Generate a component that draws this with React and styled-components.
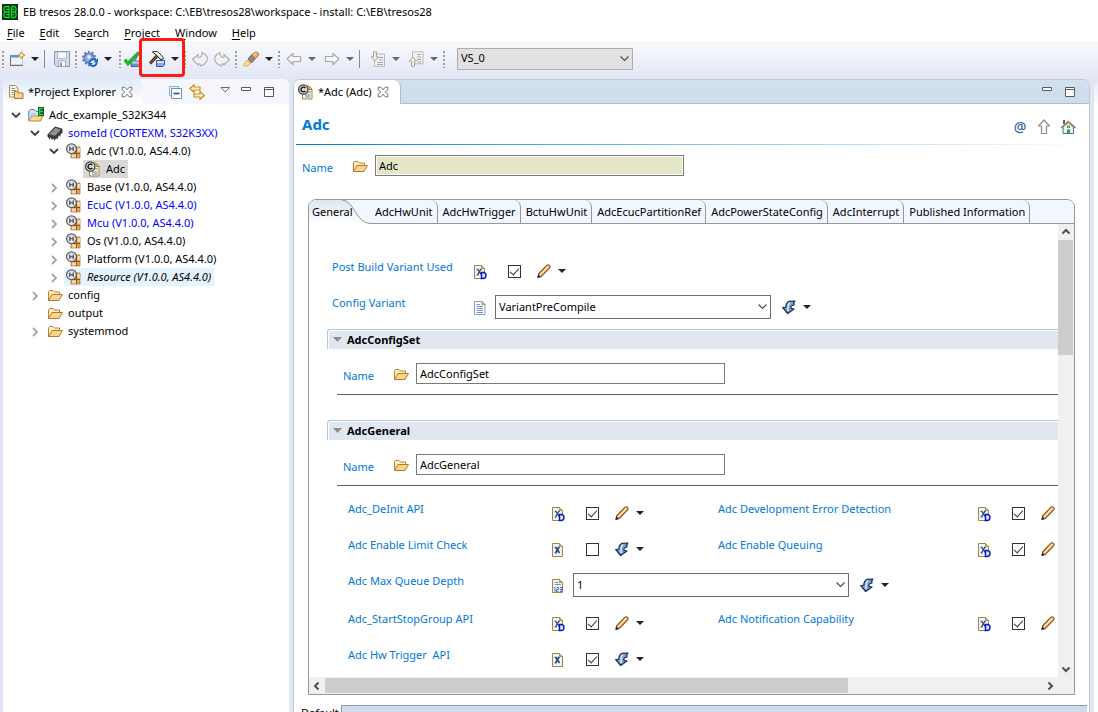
import React, { useState } from "react";
import styled, { createGlobalStyle, css } from "styled-components";

const GlobalStyle = createGlobalStyle`
  * {
    box-sizing: border-box;
  }

  body {
    margin: 0;
    background: #e1e6f6;
    color: #000000;
    font-family: "Noto Sans", "Open Sans", sans-serif;
    font-size: 11px;
    line-height: 16px;
  }

  button,
  input,
  select {
    font: inherit;
    color: inherit;
  }

  svg {
    display: block;
    flex: none;
  }
`;

/* Window */

const Window = styled.div`
  height: 100vh;
  display: flex;
  flex-direction: column;
  overflow: hidden;
  white-space: nowrap;
`;

const TitleBar = styled.header`
  display: flex;
  align-items: center;
  gap: 5px;
  height: 23px;
  flex: none;
  padding-left: 2px;
  background: #ffffff;
`;

const WindowTitle = styled.h1`
  margin: 0;
  font-size: 11px;
  font-weight: 400;
`;

const MenuBar = styled.nav`
  display: flex;
  align-items: center;
  gap: 15px;
  height: 19px;
  flex: none;
  padding-left: 7px;
  background: #ffffff;
`;

const PlainButton = styled.button`
  display: flex;
  align-items: center;
  justify-content: center;
  padding: 0;
  border: none;
  background: none;
  cursor: pointer;
`;

const MenuButton = styled(PlainButton)`
  display: block;

  u {
    text-underline-offset: 2px;
  }
`;

/* Toolbar */

const Toolbar = styled.div`
  display: flex;
  align-items: center;
  height: 37px;
  flex: none;
  padding: 0 0 5px 1px;
  border-top: 1px solid #f0f0f0;
  background: linear-gradient(#f8f9fd, #e1e6f6);
`;

const Group = styled.div`
  display: flex;
  align-items: center;
  gap: ${({ $gap }) => $gap || 2}px;
  padding-left: ${({ $before }) => $before || 0}px;
  padding-right: ${({ $after }) => $after || 0}px;
`;

const Split = styled.div`
  position: relative;
  display: flex;
`;

const ToolButton = styled(PlainButton)`
  width: 20px;
  height: 20px;
`;

const CaretButton = styled(PlainButton)`
  width: 16px;
  height: 20px;
`;

const Handle = styled.div`
  width: 4px;
  height: 18px;
  background: radial-gradient(circle at 2px 2px, #a09c94 1px, transparent 1px) 0 0 / 4px 4px;
`;

const Separator = styled.div`
  width: 4px;
  height: 18px;
  border-left: 1px solid #8a8a8a;
  margin-right: -1px;
  margin-left: 1px;
`;

const Highlight = styled.span`
  position: absolute;
  inset: -11px -2px -8px -8px;
  border: 3px solid #fb1d12;
  border-radius: 4px;
  pointer-events: none;
`;

/* Select */

const SelectBox = styled.div`
  display: grid;
  align-items: center;
  width: ${({ $width }) => $width}px;
  margin-left: ${({ $before }) => $before || 0}px;

  > * {
    grid-area: 1 / 1;
  }

  > svg {
    justify-self: end;
    margin-right: 3px;
    pointer-events: none;
  }
`;

const SelectInput = styled.select`
  appearance: none;
  width: 100%;
  height: ${({ $flat }) => ($flat ? 22 : 24)}px;
  padding: 0 20px 1px 3px;
  border: 1px solid ${({ $flat }) => ($flat ? "#adadad" : "#6f6f6f")};
  border-radius: 0;
  background: ${({ $flat }) => ($flat ? "#e1e1e1" : "#ffffff")};
`;

/* Workspace */

const Workspace = styled.main`
  flex: 1;
  min-height: 0;
  display: grid;
  grid-template-columns: 286px minmax(0, 1fr) 4px;
  column-gap: 4px;
  padding-left: 3px;
`;

const Explorer = styled.aside`
  display: flex;
  flex-direction: column;
  background: #ffffff;
  border-radius: 6px 6px 0 0;
  overflow: hidden;
`;

const ViewBar = styled.div`
  display: flex;
  align-items: center;
  height: 25px;
  flex: none;
  background: #f5f7fd;
`;

const ViewTab = styled.div`
  display: flex;
  align-items: center;
  gap: 4px;
  width: 139px;
  height: 25px;
  padding-left: 5px;
  border-radius: 6px 6px 0 0;
  background: linear-gradient(#e0ebf6, #ffffff);
`;

const ViewTools = styled.div`
  display: flex;
  align-items: center;
  gap: 2px;
  margin-left: auto;
  padding-right: ${({ $after }) => $after}px;
`;

const Tree = styled.ul`
  list-style: none;
  margin: 0;
  padding: 2px 0 0 5px;
`;

const TreeRow = styled.li`
  display: flex;
  align-items: center;
  gap: 2px;
  height: 18px;
  padding-left: ${({ $level }) => $level * 19}px;
`;

const Twisty = styled(PlainButton)`
  width: 16px;
  height: 16px;
`;

const TreeItem = styled.span`
  display: flex;
  align-items: center;
  gap: 5px;
  height: 18px;
  padding: 0 3px 0 2px;
  color: ${({ $blue }) => ($blue ? "#0000ff" : "#000000")};
  ${({ $selected }) => $selected && css`background: #d9d9d9;`}
  ${({ $hovered }) => $hovered && css`background: #e5f3ff; font-style: italic;`}
`;

/* Editor */

const Editor = styled.section`
  display: flex;
  flex-direction: column;
  min-width: 0;
  min-height: 0;
  border: 1px solid #c4c8ce;
  border-bottom: none;
  border-radius: 7px 7px 0 0;
  background: #ffffff;
  overflow: hidden;
`;

const EditorBar = styled.div`
  display: flex;
  height: 24px;
  flex: none;
  background: linear-gradient(#d3e1ef, #cddcec);
`;

const EditorTab = styled.div`
  display: flex;
  align-items: center;
  gap: 4px;
  width: 107px;
  padding-left: 4px;
  border-right: 1px solid #b4bac4;
  border-radius: 0 7px 0 0;
  background: #ffffff;
`;

const EditorBarRest = styled.div`
  flex: 1;
  display: flex;
  border-bottom: 1px solid #b0bccb;
`;

const FormHeader = styled.div`
  display: flex;
  align-items: center;
  height: 41px;
  flex: none;
  margin: 0 7px 0 2px;
  padding: 0 4px 0 6px;
  border-bottom: 1px solid;
  border-image: linear-gradient(90deg, #0078d7, #9dcdf2 60%, #ffffff) 1;
`;

const FormTitle = styled.h2`
  flex: 1;
  margin: 0;
  color: #0078d7;
  font-size: 15px;
  line-height: 20px;
`;

const HeaderTools = styled.div`
  display: flex;
  gap: 4px;
  padding-top: 5px;
`;

const Label = styled.label`
  color: #0078d7;
  width: ${({ $width }) => ($width ? $width + "px" : "auto")};
  white-space: pre;
`;

const TextInput = styled.input`
  width: 309px;
  height: 21px;
  padding: 0 3px;
  border: 1px solid #7a7a7a;
  border-radius: 0;
  background: ${({ readOnly }) => (readOnly ? "#e5e6c8" : "#ffffff")};
  ${({ readOnly }) => readOnly && css`box-shadow: inset 0 0 0 1px #ffffff;`}
`;

const NameRow = styled.div`
  display: flex;
  align-items: center;
  gap: 6px;
  padding-left: ${({ $before }) => $before}px;

  ${Label} {
    width: 44px;
    padding-top: 4px;
  }

  svg {
    margin-right: 1px;
  }
`;

const TopName = styled.div`
  flex: none;
  padding: 10px 0 23px;
`;

/* Tab folder */

const Folder = styled.div`
  flex: 1;
  min-height: 0;
  display: flex;
  flex-direction: column;
  margin: 0 14px 10px;
  border: 1px solid #979797;
  border-radius: 8px 8px 0 0;
  overflow: hidden;
`;

const TabBar = styled.div`
  display: flex;
  height: 24px;
  flex: none;
  background: #f2f7ff;
`;

const Tab = styled.button`
  height: 24px;
  padding: 0 4px 0 5px;
  border: none;
  border-right: 1px solid #979797;
  border-bottom: 1px solid #979797;
  border-radius: 0 7px 0 0;
  background: none;
`;

const ActiveTab = styled.button`
  display: flex;
  align-items: center;
  height: 24px;
  padding: 0 0 0 3px;
  border: none;
  background: linear-gradient(#dde6f0, #ffffff);
`;

const TabLabel = styled.span`
  position: relative;
  width: 30px;
  z-index: 1;
`;

const TabFill = styled.div`
  flex: 1;
  border-bottom: 1px solid #979797;
`;

const Scroller = styled.div`
  flex: 1;
  min-height: 0;
  display: grid;
  grid-template-columns: minmax(0, 1fr) 16px;
  grid-template-rows: minmax(0, 1fr) 17px;
`;

const Page = styled.div`
  overflow: hidden;
  padding: 35px 0 0 18px;
`;

const Track = styled.div`
  display: flex;
  align-items: ${({ $vertical }) => ($vertical ? "stretch" : "center")};
  flex-direction: ${({ $vertical }) => ($vertical ? "column" : "row")};
  background: #f0f0f0;
`;

const ScrollButton = styled(PlainButton)`
  width: 16px;
  height: 16px;
  flex: none;
`;

const Rail = styled.div`
  flex: 1;
`;

const Thumb = styled.div`
  background: #cdcdcd;
  ${({ $vertical, $size }) => ($vertical ? `height: ${$size}; margin-right: 1px;` : `height: 15px; width: ${$size};`)}
`;

/* Form */

const Intro = styled.div`
  height: 70px;
`;

const Field = styled.div`
  display: flex;
  align-items: flex-start;
  height: 36px;
  padding-left: ${({ $before }) => $before || 0}px;
`;

const Controls = styled.div`
  display: flex;
  align-items: center;
  height: 24px;
  padding-left: ${({ $before }) => $before || 0}px;
`;

const TypeIcon = styled.span`
  width: ${({ $width }) => $width}px;
  padding-top: 2px;
`;

const Check = styled.input`
  appearance: none;
  display: grid;
  justify-content: center;
  width: 13px;
  height: 13px;
  margin: 0 13px 0 0;
  border: 1px solid #333333;
  background: #ffffff;

  &:checked::after {
    content: "";
    width: 4px;
    height: 8px;
    border: solid #333333;
    border-width: 0 1px 1px 0;
    transform: rotate(42deg);
  }
`;

const Section = styled.section`
  margin-top: ${({ $gap }) => $gap}px;
`;

const SectionTitle = styled.h3`
  display: flex;
  align-items: center;
  gap: 5px;
  height: 20px;
  margin: 0 0 14px;
  padding-left: 5px;
  border-top: 1px solid #b3c7dc;
  border-left: 1px solid #b3c7dc;
  border-radius: 3px 0 0 0;
  background: #e0e7f1;
  box-shadow: inset 1px 1px 0 #ffffff;
  font-size: 11px;
`;

const Rule = styled.hr`
  margin: 10px 0 0 10px;
  border: none;
  border-top: 1px solid #5f5f5f;
`;

const Fields = styled.div`
  display: grid;
  grid-template-columns: 391px max-content;
  padding-top: 15px;
`;

const WideField = styled.div`
  grid-column: 1 / -1;
  height: 38px;
`;

const Footer = styled.footer`
  display: flex;
  height: 7px;
  flex: none;
  margin: 0 2px 0 7px;
  overflow: hidden;
`;

const FooterLabel = styled.span`
  width: 40px;
`;

const FooterStrip = styled.div`
  flex: 1;
  border-top: 1px solid #8e9aa8;
  border-left: 1px solid #8e9aa8;
  background: #cfddee;
`;

const SideView = styled.aside`
  margin-top: 4px;
  border-radius: 5px 0 0 0;
  background: linear-gradient(#e9edf8, #ffffff 24px);
`;

/* Icons */

const Icon = ({ size = 16, children }) => (
  <svg width={size} height={size} viewBox="0 0 16 16" fill="none" aria-hidden="true">
    {children}
  </svg>
);

const LogoIcon = () => (
  <Icon>
    <path fill="#143314" d="M0 0h16v16H0z" />
    <g stroke="#0fd32f" strokeWidth="1.3">
      <path d="M7 2.500H4.200a2.200 2.200 0 0 0-2.200 2V6a1.800 1.800 0 0 0 2 2h3M7 8H4a1.800 1.800 0 0 0-2 2v1.500a2.200 2.200 0 0 0 2.200 2H7zM7 2.500V8M4 5.300h3M4 10.700h3" />
      <path d="M9.500 2.500V14M9.500 2.500h2.200A2.200 2.200 0 0 1 14 4.600V6a1.900 1.900 0 0 1-2 2H9.500M12 8a2 2 0 0 1 2 2v1.300a2.200 2.200 0 0 1-2.200 2.200H9.500M9.500 5.300H12M9.500 10.700H12" />
    </g>
  </Icon>
);

const Caret = ({ color = "#222222" }) => (
  <svg width="8" height="4" viewBox="0 0 8 4" aria-hidden="true">
    <path fill={color} d="M0 0h8L4 4z" />
  </svg>
);

const Chevron = ({ down, color = "#404040" }) => (
  <Icon>
    <path d={down ? "M4 6l4 4 4-4" : "M6 5l4 4-4 4"} stroke={color} strokeWidth="1.8" />
  </Icon>
);

const ThinChevron = () => (
  <svg width="11" height="6" viewBox="0 0 11 6" fill="none" aria-hidden="true">
    <path d="M1.500 .5l4 4 4-4" stroke="#4a4a4a" strokeWidth="1.100" />
  </svg>
);

const ScrollArrow = ({ turn }) => (
  <Icon>
    <path d="M4.500 9.500L8 6l3.500 3.500" stroke="#505050" strokeWidth="2" transform={`rotate(${turn} 8 8)`} />
  </Icon>
);

const NewIcon = () => (
  <Icon>
    <rect x="1.500" y="4.500" width="12" height="10" fill="#eaf4fc" stroke="#8a6d2c" />
    <path fill="#5d94cf" d="M1 4h9v2.500H1z" />
    <path d="M3 13.500h10.500V7" stroke="#bcd8ee" />
    <path d="M12.500 .5l1.200 2.500L16 4.200l-2.300 1.200-1.200 2.600-1.200-2.600L9 4.200 11.300 3z" fill="#ffe9a0" stroke="#b98a22" strokeWidth=".9" />
  </Icon>
);

const SaveIcon = () => (
  <Icon>
    <path d="M.5 .5h15v15H2.500L.5 13.500z" fill="#d3dde9" stroke="#8499b2" />
    <path fill="#f7fafd" stroke="#9caec2" strokeWidth=".7" d="M3.500 1h9v6.500h-9z" />
    <path fill="#f7fafd" stroke="#8499b2" strokeWidth=".7" d="M4.500 10h7v5.500h-7z" />
    <path fill="#8499b2" d="M6 11.500h2v4H6z" />
  </Icon>
);

const GearIcon = () => (
  <Icon>
    <circle cx="7" cy="7" r="5" fill="#8fa9dd" stroke="#516caa" strokeWidth="1.200" />
    <circle cx="7" cy="7" r="6.300" stroke="#516caa" strokeWidth="1.500" strokeDasharray="2 1.960" />
    <circle cx="7" cy="6" r="1.800" fill="#e6eefa" />
    <path fill="#eef4fd" d="M7 8h8.500v7H9z" />
    <path d="M7.500 11.500a3.600 3.600 0 0 1 6.300-2M14.700 11.500a3.600 3.600 0 0 1-6.300 2.200" stroke="#1767c8" strokeWidth="2" />
    <path fill="#1767c8" d="M16 7v4.500h-4.500zM6.500 16v-4.500l4.500.5z" />
  </Icon>
);

const CheckIcon = () => (
  <Icon>
    <path fill="#6a92cc" stroke="#2d4f90" strokeWidth=".8" d="M7 10h9v4.500l-2 1H7z" />
    <path fill="#bfd4ef" d="M8 10.500h8v2H8z" />
    <path d="M.8 8.500l3.200 4L15 1.500" stroke="#21b52c" strokeWidth="3.600" />
    <path d="M11 9.500l4-8" stroke="#777777" strokeWidth="1.500" />
  </Icon>
);

const HammerIcon = () => (
  <Icon>
    <path fill="#86abe0" stroke="#28489a" strokeWidth=".9" d="M7.500 9.500h8v4.500l-2 1.500h-6z" />
    <path fill="#d5e4f7" d="M8 10h7v2H8z" />
    <path d="M1 12.500L8.500 4.500" stroke="#4a2f14" strokeWidth="3.200" />
    <path d="M1.500 12l6.500-7" stroke="#96703c" strokeWidth="1" />
    <path d="M3.500 1C6.500 0 9.500.5 11 3l3.500 4-1.200 1.500-2.300-.3-3.500-4z" fill="#e4e4e4" stroke="#1f1f1f" />
    <path d="M5 1.300l4.500 1 3.500 4.500" stroke="#ffffff" strokeWidth=".9" />
  </Icon>
);

const UndoIcon = ({ flip }) => (
  <Icon>
    <path
      transform={flip ? "matrix(-1 0 0 1 16 0)" : undefined}
      d="M.6 8.500L6 3.500V6.500c2.800.2 4.300-1.500 4-5 4 2 6 5 5 8C14 12 11.500 14 8.500 15l-.5-2-2-.2V14z"
      fill="#f2f2f2"
      stroke="#adadad"
      strokeWidth="1.100"
    />
  </Icon>
);

const TorchIcon = () => (
  <Icon>
    <path d="M.5 13.500L4 9l3.500 3.500L4.500 15H1z" fill="#ffe08a" stroke="#e3a63a" strokeWidth=".9" />
    <path d="M5 8l3.500-4 4 3.500-4 4.500z" fill="#918787" stroke="#5d5454" strokeWidth=".9" />
    <path d="M8.500 4L13 .8l2.500 1.500-.3 2.500L12.300 7.500z" fill="#e7b26d" stroke="#b17328" />
    <path d="M10.500 4l3-2" stroke="#fff0c8" />
  </Icon>
);

const ArrowIcon = ({ turn = 0, color = "#a9a9a9" }) => (
  <Icon>
    <path
      transform={`rotate(${turn} 8 8)`}
      d="M1 8l6-5.500v3h7.500v5H7v3z"
      fill="#fafafa"
      stroke={color}
      strokeWidth="1.200"
      strokeLinejoin="round"
    />
  </Icon>
);

const ListArrowIcon = ({ up }) => (
  <Icon>
    <path fill="#f3f3f3" stroke="#b2b2b2" strokeWidth=".9" d={up ? "M4.500 .8h10.500v12H4.500z" : "M4.500 3h10v12.300h-10z"} />
    <path stroke="#a3a3a3" d={up ? "M9 3.500h4M9 6h4M9 8.500h4M10 11h3" : "M9 6.500h4M9 9h4M7 11.500h6M7 13.500h6"} />
    <path
      transform={up ? "translate(0 16) scale(1 -1)" : undefined}
      d="M3.500 .8h3v5h2.300L5 10 1 5.800h2.500z"
      fill="#ecebe4"
      stroke="#a8a59a"
    />
  </Icon>
);

const ExplorerIcon = () => (
  <Icon>
    <path d="M1.500 1.500h6l2.500 2.500v9H1.500z" fill="#fff9e2" stroke="#b0893d" />
    <path stroke="#6d8fc4" d="M3.500 4.500H7M3.500 6.500H8M3.500 8.500h2M3.500 10.500h2" />
    <path d="M6.500 14.500v-7h3l1 1.500h4.500v5.500z" fill="#f6d48b" stroke="#b1772b" />
  </Icon>
);

const CloseIcon = () => (
  <Icon size={14}>
    <path
      d="M2.500 2.500h3L8 5.500l2.500-3h3v3l-3 2.500 3 2.500v3h-3L8 10.500l-2.500 3h-3v-3l3-2.500-3-2.500z"
      fill="#ffffff"
      stroke="#6d6d6d"
      strokeWidth="1.100"
    />
  </Icon>
);

const CollapseIcon = () => (
  <Icon>
    <path fill="#e8f3fc" stroke="#8eafd2" d="M2.500 2.500h9v9h-9z" />
    <path fill="#ffffff" stroke="#6d94c0" d="M4.500 4.500h10v10h-10z" />
    <path stroke="#183f77" strokeWidth="1.500" d="M6.500 9.500h6" />
  </Icon>
);

const LinkIcon = () => (
  <Icon>
    <path d="M.8 4.500L5 .8V3h6v3H5v2.300zM15.500 11.500L11 15.300V13H5v-3h6V7.500z" fill="#fff1c9" stroke="#cf8b1c" strokeWidth="1.200" />
  </Icon>
);

const ViewMenuIcon = () => (
  <Icon>
    <path d="M4 3.500h8.500L8.200 8z" fill="#ffffff" stroke="#6a6a6a" />
  </Icon>
);

const MinimizeIcon = () => (
  <Icon>
    <path fill="#ffffff" stroke="#5a5a5a" d="M2.500 3.500h9v3h-9z" />
  </Icon>
);

const MaximizeIcon = () => (
  <Icon>
    <path fill="#ffffff" stroke="#5a5a5a" d="M3.500 3.500h9v9h-9zM3.500 5.500h9" />
  </Icon>
);

const ProjectIcon = () => (
  <Icon>
    <path d="M.8 13.500V4l1.500-1.500h4L8 4.500h5v9z" fill="#d5e8f8" stroke="#5a7fae" />
    <path d="M.8 14l3-5h11l-2.500 5z" fill="#f9d98c" stroke="#b98b3e" />
    <path d="M3 6h5v3H3z" fill="#9fd1f1" />
    <path fill="#1d4d26" d="M10 0h6v9h-6z" />
    <path d="M15 1.500h-3.500v6H15M11.500 4.500H15" stroke="#18d843" strokeWidth="1.400" />
  </Icon>
);

const ChipIcon = () => (
  <Icon>
    <path d="M1 9.500L8 2l7 2v3.500L8.500 14 1 12z" fill="#3c3c3c" stroke="#222222" strokeWidth=".8" />
    <path d="M2 9.300l6.300-6.500 5.700 1.600L8 10.800z" fill="#8f8f8f" />
    <path d="M2.500 12.500v2M5 13v2M7.500 13.500v2M10.500 12v2M13 9.500v2" stroke="#444444" />
  </Icon>
);

const ModuleIcon = () => (
  <Icon>
    <path d="M5 4h9v11H5z" fill="#e2a766" stroke="#a86a2c" strokeWidth=".7" />
    <path d="M5.500 10.500H14M10.500 4v11" stroke="#8b5520" />
    <path d="M11.500 5H14v4h-2.500zM6 11.500h4v3H6z" fill="#f6d5a5" />
    <circle cx="5.500" cy="5.700" r="4.900" fill="#e4e4ea" stroke="#5c5c66" strokeWidth="1.200" />
    <path d="M3.800 3.500v4.500M7.200 3.500v4.500M3.800 5.700h3.400" stroke="#3b3b45" strokeWidth="1.100" />
  </Icon>
);

const ConfigIcon = () => (
  <Icon>
    <path d="M4.500 2h6.500l3 3v10H4.500z" fill="#fff8e0" stroke="#ab8639" />
    <path d="M11 2v3.500h3" fill="#e9b64c" stroke="#ab8639" />
    <path stroke="#5b82bd" d="M10 8h3M7 11h5.500M7 13h5.500" />
    <circle cx="5.300" cy="5.500" r="4.700" fill="#d9d9d9" stroke="#3c3c3c" strokeWidth="1.200" />
    <path d="M7.300 4a2.400 2.400 0 1 0 0 3" stroke="#111111" strokeWidth="1.400" />
  </Icon>
);

const FolderIcon = () => (
  <Icon>
    <path d="M1.500 13.500v-9l1-1h3.500l1.500 1.500h5v3" fill="#fdeebb" stroke="#b5823a" />
    <path d="M1.500 13.500L5 7.500h10.500l-3.500 6z" fill="#f8d68a" stroke="#b5782c" strokeLinejoin="round" />
  </Icon>
);

const PageShape = () => (
  <>
    <path d="M2.500 1.500h7l3 3v10h-10z" fill="#eef4fc" stroke="#a3853a" />
    <path d="M9.500 1.500v3h3z" fill="#e6bd5f" stroke="#a3853a" strokeWidth=".8" />
  </>
);

const VariableIcon = ({ derived }) => (
  <Icon>
    <PageShape />
    <path d="M5.500 5l4 6M9 5l-3.500 6" stroke="#28456f" strokeWidth={derived ? 1.3 : 1.6} />
    <path d="M4.500 5.300h2M8.500 5.300h1.500M4.500 11h2" stroke="#28456f" strokeWidth=".8" />
    {derived && <path d="M9.500 8.500v6h1.500a3 3 0 0 0 0-6zM8.500 8.500h2M8.500 14.500h2" fill="#d9e4ff" stroke="#0b18b8" strokeWidth="1.400" />}
  </Icon>
);

const EnumIcon = () => (
  <Icon>
    <path d="M2.500 1.500h7.500l3 3v10H2.500z" fill="#ffffff" stroke="#8b9dbd" />
    <path d="M10 1.500v3h3z" fill="#e6c98a" stroke="#a3853a" strokeWidth=".8" />
    <path stroke="#7893cc" d="M4.500 4.500H8M4.500 6.500h6.500M4.500 8.500h6.500M4.500 10.500h6.500M4.500 12.500h6.500" />
  </Icon>
);

const NumberIcon = () => (
  <Icon>
    <PageShape />
    <path stroke="#7893cc" d="M4.500 4.500H8M4.500 6.500h6.500" />
    <path stroke="#3c64ac" strokeWidth=".9" d="M4 9.500h1v4.500M6.500 9.500h2v2h-2v2h2M10 9.500h2v4h-2M10 11.500h2" />
  </Icon>
);

const PencilIcon = () => (
  <Icon>
    <path d="M2.500 11L10.500 2.700c1-1 2.300-1 3-.4.900.8.700 2-.1 2.900L5.300 13.500l-2.800.8z" fill="#f3b873" stroke="#8f5218" strokeWidth="1.100" />
    <path d="M4.500 11.500l8-8.300" stroke="#ffe2b8" strokeWidth="1.400" />
    <path d="M1.200 15l.9-3.700 2.700 2.700z" fill="#15245f" />
  </Icon>
);

const ApplyIcon = () => (
  <Icon>
    <path
      d="M13.800 2L8 2.300C5.300 3.800 4.700 6 4.900 8.200L1.700 8.500l5 6 6.300-4.500-3-.6c-.4-1.700.2-2.900 3-3.400-.6-1.500-.2-2.800.8-4z"
      fill="#7f9fc8"
      stroke="#16305c"
      strokeWidth="1.200"
      strokeLinejoin="round"
    />
    <path d="M9 3.500C6.500 5.500 7 8 7 12" stroke="#dbe8f5" strokeWidth="1.600" />
  </Icon>
);

const HomeIcon = () => (
  <Icon>
    <path d="M3 8v6.500h10.500V8L8.300 3.500z" fill="#e9f3fc" stroke="#3c73a4" />
    <path d="M1 9l7.200-6.500L15.500 9" stroke="#a58457" strokeWidth="1.600" />
    <path fill="#8a5a33" d="M3 1h2v4H3z" />
    <path fill="#3f9a3d" d="M7 6.500h3v2.500H7zM7 10.500h3V15H7z" />
    <path fill="#d9e44b" d="M8 7h1v1.500H8z" />
  </Icon>
);

const SectionCaret = () => (
  <svg width="9" height="5" viewBox="0 0 9 5" aria-hidden="true">
    <path d="M0 0h9L4.500 5z" fill="#8d8d8d" />
  </svg>
);

const AtIcon = styled.span`
  color: #2a66a5;
  font-size: 14px;
  font-weight: 500;
  line-height: 16px;
`;

/* Parts */

const menus = [
  ["", "F", "ile"],
  ["", "E", "dit"],
  ["Se", "a", "rch"],
  ["", "P", "roject"],
  ["", "W", "indow"],
  ["", "H", "elp"],
];

const tree = [
  { level: 0, open: true, icon: <ProjectIcon />, text: "Adc_example_S32K344" },
  { level: 1, open: true, icon: <ChipIcon />, text: "someId (CORTEXM, S32K3XX)", blue: true },
  { level: 2, open: true, icon: <ModuleIcon />, text: "Adc (V1.0.0, AS4.4.0)" },
  { level: 3, leaf: true, icon: <ConfigIcon />, text: "Adc", selected: true },
  { level: 2, icon: <ModuleIcon />, text: "Base (V1.0.0, AS4.4.0)" },
  { level: 2, icon: <ModuleIcon />, text: "EcuC (V1.0.0, AS4.4.0)", blue: true },
  { level: 2, icon: <ModuleIcon />, text: "Mcu (V1.0.0, AS4.4.0)", blue: true },
  { level: 2, icon: <ModuleIcon />, text: "Os (V1.0.0, AS4.4.0)" },
  { level: 2, icon: <ModuleIcon />, text: "Platform (V1.0.0, AS4.4.0)" },
  { level: 2, icon: <ModuleIcon />, text: "Resource (V1.0.0, AS4.4.0)", hovered: true },
  { level: 1, icon: <FolderIcon />, text: "config" },
  { level: 1, leaf: true, icon: <FolderIcon />, text: "output" },
  { level: 1, icon: <FolderIcon />, text: "systemmod" },
];

const tabs = [
  "AdcHwUnit",
  "AdcHwTrigger",
  "BctuHwUnit",
  "AdcEcucPartitionRef",
  "AdcPowerStateConfig",
  "AdcInterrupt",
  "Published Information",
];

const Tool = ({ label, children }) => (
  <ToolButton type="button" aria-label={label}>
    {children}
  </ToolButton>
);

const SplitTool = ({ label, disabled, highlighted, children }) => (
  <Split>
    <Tool label={label}>{children}</Tool>
    <CaretButton type="button" aria-label={`${label} options`}>
      <Caret color={disabled ? "#6a6a6a" : undefined} />
    </CaretButton>
    {highlighted && <Highlight />}
  </Split>
);

const Select = ({ id, label, width, before, flat, value }) => (
  <SelectBox $width={width} $before={before}>
    <SelectInput id={id} aria-label={label} $flat={flat} defaultValue={value}>
      <option>{value}</option>
    </SelectInput>
    <ThinChevron />
  </SelectBox>
);

const CheckField = ({ id, label, labelWidth, before, derived, on, edit }) => {
  const [checked, setChecked] = useState(Boolean(on));

  return (
    <Field $before={before}>
      <Label htmlFor={id} $width={labelWidth}>{label}</Label>
      <Controls>
        <TypeIcon $width={36}>
          <VariableIcon derived={derived} />
        </TypeIcon>
        <Check id={id} type="checkbox" checked={checked} onChange={(e) => setChecked(e.target.checked)} />
        <SplitTool label={`Edit ${label}`}>{edit ? <PencilIcon /> : <ApplyIcon />}</SplitTool>
      </Controls>
    </Field>
  );
};

const NamedSection = ({ title, gap, children }) => (
  <Section $gap={gap}>
    <SectionTitle>
      <SectionCaret />
      {title}
    </SectionTitle>
    <NameRow $before={16}>
      <Label htmlFor={title}>Name</Label>
      <FolderIcon />
      <TextInput id={title} defaultValue={title} />
    </NameRow>
    <Rule />
    {children}
  </Section>
);

export default function App() {
  return (
    <Window>
      <GlobalStyle />
      <TitleBar>
        <LogoIcon />
        <WindowTitle>EB tresos 28.0.0 - workspace: C:\EB\tresos28\workspace - install: C:\EB\tresos28</WindowTitle>
      </TitleBar>
      <MenuBar>
        {menus.map(([start, key, end]) => (
          <MenuButton type="button" key={start + key}>
            {start}<u>{key}</u>{end}
          </MenuButton>
        ))}
      </MenuBar>

      <Toolbar>
        <Handle />
        <Group $before={2}>
          <SplitTool label="New"><NewIcon /></SplitTool>
        </Group>
        <Separator />
        <Group $before={5} $after={2}>
          <Tool label="Save"><SaveIcon /></Tool>
        </Group>
        <Handle />
        <Group $before={2} $after={2}>
          <SplitTool label="Generate"><GearIcon /></SplitTool>
        </Group>
        <Handle />
        <Group $gap={5}>
          <Tool label="Verify"><CheckIcon /></Tool>
          <SplitTool label="Build" highlighted><HammerIcon /></SplitTool>
        </Group>
        <Handle />
        <Group $before={3} $after={2}>
          <Tool label="Undo"><UndoIcon /></Tool>
          <Tool label="Redo"><UndoIcon flip /></Tool>
        </Group>
        <Handle />
        <Group $before={3}>
          <SplitTool label="Search"><TorchIcon /></SplitTool>
        </Group>
        <Handle />
        <Group $before={3}>
          <SplitTool label="Back" disabled><ArrowIcon /></SplitTool>
          <SplitTool label="Forward" disabled><ArrowIcon turn={180} /></SplitTool>
        </Group>
        <Separator />
        <Group $before={6}>
          <SplitTool label="Next annotation" disabled><ListArrowIcon /></SplitTool>
          <SplitTool label="Previous annotation" disabled><ListArrowIcon up /></SplitTool>
        </Group>
        <Handle />
        <Select label="Variant" width={176} before={11} flat value="VS_0" />
      </Toolbar>

      <Workspace>
        <Explorer>
          <ViewBar>
            <ViewTab>
              <ExplorerIcon />
              *Project Explorer
              <CloseIcon />
            </ViewTab>
            <ViewTools $after={10}>
              <Group $after={6}>
                <Tool label="Collapse all"><CollapseIcon /></Tool>
                <Tool label="Link with editor"><LinkIcon /></Tool>
              </Group>
              <Tool label="View menu"><ViewMenuIcon /></Tool>
              <Tool label="Minimize"><MinimizeIcon /></Tool>
              <Tool label="Maximize"><MaximizeIcon /></Tool>
            </ViewTools>
          </ViewBar>
          <Tree>
            {tree.map((item) => (
              <TreeRow key={item.text} $level={item.level}>
                <Twisty type="button" aria-label={`Toggle ${item.text}`}>
                  {!item.leaf && <Chevron down={item.open} color={item.open ? "#404040" : "#a6a6a6"} />}
                </Twisty>
                <TreeItem $blue={item.blue} $selected={item.selected} $hovered={item.hovered}>
                  {item.icon}
                  {item.text}
                </TreeItem>
              </TreeRow>
            ))}
          </Tree>
        </Explorer>

        <Editor>
          <EditorBar>
            <EditorTab>
              <ConfigIcon />
              *Adc (Adc)
              <CloseIcon />
            </EditorTab>
            <EditorBarRest>
              <ViewTools $after={9}>
                <Tool label="Minimize editor"><MinimizeIcon /></Tool>
                <Tool label="Maximize editor"><MaximizeIcon /></Tool>
              </ViewTools>
            </EditorBarRest>
          </EditorBar>

          <FormHeader>
            <FormTitle>Adc</FormTitle>
            <HeaderTools>
              <Tool label="Annotations"><AtIcon>@</AtIcon></Tool>
              <Tool label="Up"><ArrowIcon turn={90} color="#8f8f8f" /></Tool>
              <Tool label="Home"><HomeIcon /></Tool>
            </HeaderTools>
          </FormHeader>

          <TopName>
            <NameRow $before={8}>
              <Label htmlFor="name">Name</Label>
              <FolderIcon />
              <TextInput id="name" readOnly value="Adc" />
            </NameRow>
          </TopName>

          <Folder>
            <TabBar>
              <ActiveTab type="button">
                <TabLabel>General</TabLabel>
                <svg width="28" height="24" viewBox="0 0 28 24" fill="none" aria-hidden="true">
                  <path d="M0 0c12 0 14 23 28 23.500V0z" fill="#f2f7ff" />
                  <path d="M0 0c12 0 14 23 28 23.500" stroke="#979797" />
                </svg>
              </ActiveTab>
              {tabs.map((tab) => (
                <Tab type="button" key={tab}>{tab}</Tab>
              ))}
              <TabFill />
            </TabBar>

            <Scroller>
              <Page>
                <Intro>
                  <CheckField id="post-build" label="Post Build Variant Used" labelWidth={140} before={5} derived on edit />
                  <Field $before={5}>
                    <Label htmlFor="config-variant" $width={140}>Config Variant</Label>
                    <Controls>
                      <TypeIcon $width={23}><EnumIcon /></TypeIcon>
                      <Select id="config-variant" width={276} value="VariantPreCompile" />
                      <Group $before={8}>
                        <SplitTool label="Edit Config Variant"><ApplyIcon /></SplitTool>
                      </Group>
                    </Controls>
                  </Field>
                </Intro>

                <NamedSection title="AdcConfigSet" gap={0} />

                <NamedSection title="AdcGeneral" gap={25}>
                  <Fields>
                    <CheckField id="deinit" label="Adc_DeInit API" labelWidth={202} before={21} derived on edit />
                    <CheckField id="det" label="Adc Development Error Detection" labelWidth={258} derived on edit />
                    <CheckField id="limit" label="Adc Enable Limit Check" labelWidth={202} before={21} />
                    <CheckField id="queuing" label="Adc Enable Queuing" labelWidth={258} derived on edit />
                    <WideField>
                      <Field $before={21}>
                        <Label htmlFor="depth" $width={202}>Adc Max Queue Depth</Label>
                        <Controls>
                          <TypeIcon $width={23}><NumberIcon /></TypeIcon>
                          <Select id="depth" width={276} value="1" />
                          <Group $before={8}>
                            <SplitTool label="Edit Adc Max Queue Depth"><ApplyIcon /></SplitTool>
                          </Group>
                        </Controls>
                      </Field>
                    </WideField>
                    <CheckField id="start-stop" label="Adc_StartStopGroup API" labelWidth={202} before={21} derived on edit />
                    <CheckField id="notification" label="Adc Notification Capability" labelWidth={258} derived on edit />
                    <CheckField id="hw-trigger" label="Adc Hw Trigger  API" labelWidth={202} before={21} on />
                  </Fields>
                </NamedSection>
              </Page>

              <Track $vertical>
                <ScrollButton type="button" aria-label="Scroll up"><ScrollArrow turn={0} /></ScrollButton>
                <Rail><Thumb $vertical $size="115px" /></Rail>
                <ScrollButton type="button" aria-label="Scroll down"><ScrollArrow turn={180} /></ScrollButton>
              </Track>
              <Track>
                <ScrollButton type="button" aria-label="Scroll left"><ScrollArrow turn={-90} /></ScrollButton>
                <Rail><Thumb $size="73%" /></Rail>
                <ScrollButton type="button" aria-label="Scroll right"><ScrollArrow turn={90} /></ScrollButton>
              </Track>
              <Track />
            </Scroller>
          </Folder>

          <Footer>
            <FooterLabel>Default</FooterLabel>
            <FooterStrip />
          </Footer>
        </Editor>

        <SideView />
      </Workspace>
    </Window>
  );
}
